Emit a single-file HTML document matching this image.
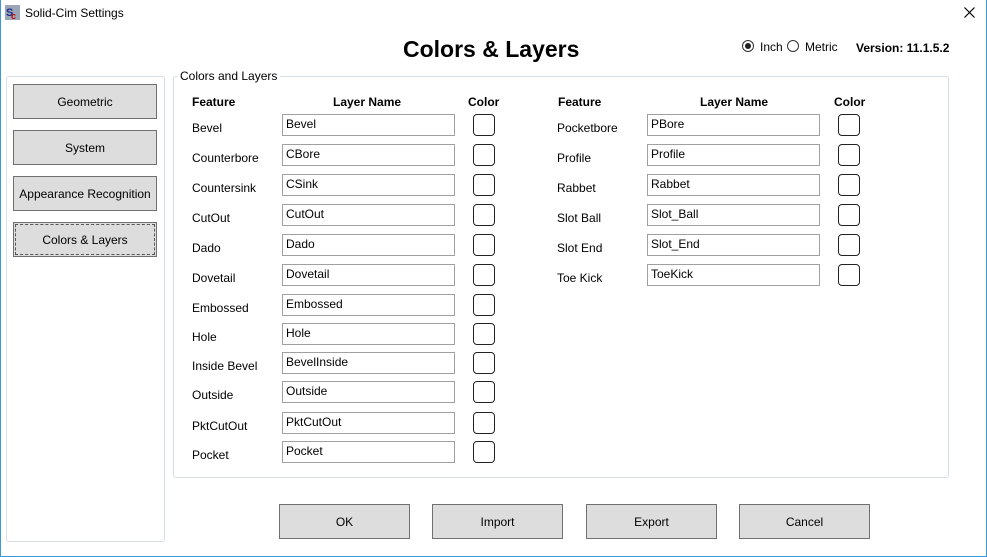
<!DOCTYPE html>
<html><head><style>
*{margin:0;padding:0;box-sizing:border-box}
body{width:987px;height:557px;position:relative;background:#fff;font-family:"Liberation Sans",sans-serif;font-size:12px;color:#000;overflow:hidden}
.a{position:absolute}
.win{left:0;top:0;width:987px;height:557px;border:1px solid #3a9ad9;border-top:none}
.btn{position:absolute;background:#dddddd;border:1px solid #707070;text-align:center;font-size:12px}
.lbl{position:absolute;font-size:12px}
.inp{position:absolute;width:173px;height:22px;border:1px solid #a0a0a0;font-size:12px;padding:2px 3px;background:#fff}
.cb{position:absolute;width:22px;height:22px;border:1px solid #222;border-radius:4px}
.h{position:absolute;font-weight:bold;font-size:12px}
</style></head><body>
<div class="a win"></div>
<svg class="a" style="left:5px;top:5px" width="15" height="15"><rect width="15" height="15" fill="#9aa6b8"/><text x="1" y="11" font-size="11" font-weight="bold" fill="#1a2b8a" font-family="Liberation Sans">S</text><text x="6" y="14" font-size="9" font-weight="bold" fill="#c00" font-family="Liberation Sans">c</text></svg>
<div class="a" style="left:25px;top:6px;font-size:12px">Solid-Cim Settings</div>
<svg class="a" style="left:964px;top:7px" width="11" height="11"><path d="M0.5 0.5L10.5 10.5M10.5 0.5L0.5 10.5" stroke="#000" stroke-width="1.2"/></svg>
<div class="a" style="left:403px;top:36px;font-size:23px;font-weight:bold">Colors &amp; Layers</div>
<div class="a" style="left:742px;top:40px;width:12px;height:12px;border:1px solid #333;border-radius:50%"><div style="width:6px;height:6px;background:#222;border-radius:50%;margin:2px"></div></div>
<div class="a" style="left:760px;top:40px">Inch</div>
<div class="a" style="left:787px;top:40px;width:12px;height:12px;border:1px solid #333;border-radius:50%"></div>
<div class="a" style="left:805px;top:40px">Metric</div>
<div class="a" style="left:856px;top:41px;font-weight:bold">Version: 11.1.5.2</div>

<div class="a" style="left:6px;top:76px;width:159px;height:466px;border:1px solid #d5dfe5;border-radius:3px"></div>
<div class="btn" style="left:13px;top:84px;width:144px;height:35px;line-height:35px">Geometric</div>
<div class="btn" style="left:13px;top:130px;width:144px;height:35px;line-height:35px">System</div>
<div class="btn" style="left:13px;top:176px;width:144px;height:35px;line-height:35px">Appearance Recognition</div>
<div class="btn" style="left:13px;top:222px;width:144px;height:35px;line-height:34px;outline:1px dashed #555;outline-offset:-3px">Colors &amp; Layers</div>

<div class="a" style="left:173px;top:76px;width:776px;height:402px;border:1px solid #d5dfe5;border-radius:3px"></div>
<div class="a" style="left:177px;top:69px;background:#fff;padding:0 3px">Colors and Layers</div>

<div class="h" style="left:192px;top:95px">Feature</div>
<div class="h" style="left:333px;top:95px">Layer Name</div>
<div class="h" style="left:468px;top:95px">Color</div>
<div class="h" style="left:558px;top:95px">Feature</div>
<div class="h" style="left:700px;top:95px">Layer Name</div>
<div class="h" style="left:834px;top:95px">Color</div>

<div class="lbl" style="left:192px;top:121px">Bevel</div><div class="inp" style="left:282px;top:114px">Bevel</div><div class="cb" style="left:473px;top:114px"></div>
<div class="lbl" style="left:192px;top:151px">Counterbore</div><div class="inp" style="left:282px;top:144px">CBore</div><div class="cb" style="left:473px;top:144px"></div>
<div class="lbl" style="left:192px;top:181px">Countersink</div><div class="inp" style="left:282px;top:174px">CSink</div><div class="cb" style="left:473px;top:174px"></div>
<div class="lbl" style="left:192px;top:211px">CutOut</div><div class="inp" style="left:282px;top:204px">CutOut</div><div class="cb" style="left:473px;top:204px"></div>
<div class="lbl" style="left:192px;top:241px">Dado</div><div class="inp" style="left:282px;top:234px">Dado</div><div class="cb" style="left:473px;top:234px"></div>
<div class="lbl" style="left:192px;top:271px">Dovetail</div><div class="inp" style="left:282px;top:264px">Dovetail</div><div class="cb" style="left:473px;top:264px"></div>
<div class="lbl" style="left:192px;top:301px">Embossed</div><div class="inp" style="left:282px;top:294px">Embossed</div><div class="cb" style="left:473px;top:294px"></div>
<div class="lbl" style="left:192px;top:330px">Hole</div><div class="inp" style="left:282px;top:323px">Hole</div><div class="cb" style="left:473px;top:323px"></div>
<div class="lbl" style="left:192px;top:359px">Inside Bevel</div><div class="inp" style="left:282px;top:352px">BevelInside</div><div class="cb" style="left:473px;top:352px"></div>
<div class="lbl" style="left:192px;top:388px">Outside</div><div class="inp" style="left:282px;top:381px">Outside</div><div class="cb" style="left:473px;top:381px"></div>
<div class="lbl" style="left:192px;top:419px">PktCutOut</div><div class="inp" style="left:282px;top:412px">PktCutOut</div><div class="cb" style="left:473px;top:412px"></div>
<div class="lbl" style="left:192px;top:448px">Pocket</div><div class="inp" style="left:282px;top:441px">Pocket</div><div class="cb" style="left:473px;top:441px"></div>

<div class="lbl" style="left:557px;top:121px">Pocketbore</div><div class="inp" style="left:647px;top:114px">PBore</div><div class="cb" style="left:838px;top:114px"></div>
<div class="lbl" style="left:557px;top:151px">Profile</div><div class="inp" style="left:647px;top:144px">Profile</div><div class="cb" style="left:838px;top:144px"></div>
<div class="lbl" style="left:557px;top:181px">Rabbet</div><div class="inp" style="left:647px;top:174px">Rabbet</div><div class="cb" style="left:838px;top:174px"></div>
<div class="lbl" style="left:557px;top:211px">Slot Ball</div><div class="inp" style="left:647px;top:204px">Slot_Ball</div><div class="cb" style="left:838px;top:204px"></div>
<div class="lbl" style="left:557px;top:241px">Slot End</div><div class="inp" style="left:647px;top:234px">Slot_End</div><div class="cb" style="left:838px;top:234px"></div>
<div class="lbl" style="left:557px;top:271px">Toe Kick</div><div class="inp" style="left:647px;top:264px">ToeKick</div><div class="cb" style="left:838px;top:264px"></div>

<div class="btn" style="left:279px;top:504px;width:131px;height:35px;line-height:35px">OK</div>
<div class="btn" style="left:432px;top:504px;width:131px;height:35px;line-height:35px">Import</div>
<div class="btn" style="left:586px;top:504px;width:131px;height:35px;line-height:35px">Export</div>
<div class="btn" style="left:739px;top:504px;width:131px;height:35px;line-height:35px">Cancel</div>
</body></html>
